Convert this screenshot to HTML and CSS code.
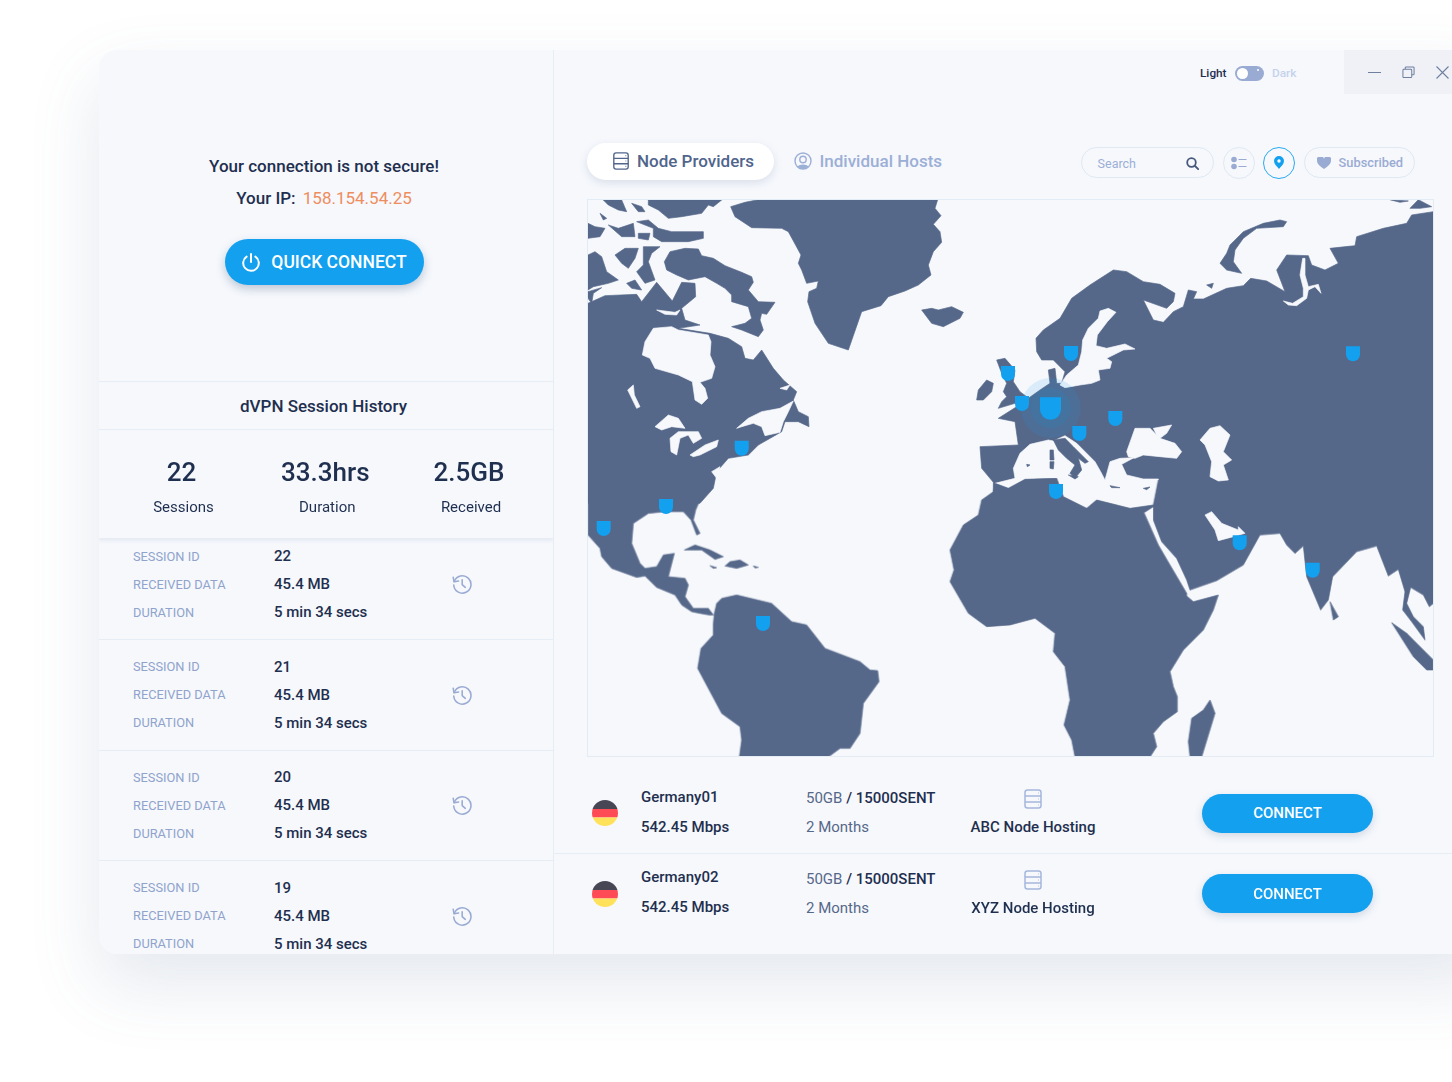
FILE: index.html
```html
<!DOCTYPE html>
<html lang="en">
<head>
    <meta charset="UTF-8">
    <title>dVPN Client</title>
    <link rel="stylesheet" href="styles.css">
</head>
<body>
    <svg class="defs" width="0" height="0">
        <defs>
            <symbol id="server" viewBox="0 0 18 20">
                <rect x="1" y="1" width="16" height="18" rx="2.5" fill="none" stroke="currentColor" stroke-width="1.5"/>
                <path d="M1 7h16M1 13h16" stroke="currentColor" stroke-width="1.5"/>
                <path d="M14 4h.8M14 10h.8M14 16h.8" stroke="currentColor" stroke-width="1.2"/>
            </symbol>
            <symbol id="history" viewBox="0 0 24 24">
                <path d="M3.6 9.2A9.4 9.4 0 1 1 3 13" fill="none" stroke="currentColor" stroke-width="1.7" stroke-linecap="round"/>
                <path d="M2.4 4.6l.9 5 5-.9" fill="none" stroke="currentColor" stroke-width="1.7" stroke-linecap="round" stroke-linejoin="round"/>
                <path d="M12.2 7.4v5.2l3.4 3" fill="none" stroke="currentColor" stroke-width="1.7" stroke-linecap="round" stroke-linejoin="round"/>
            </symbol>
            <symbol id="flag-de" viewBox="0 0 26 26">
                <clipPath id="flag-clip"><circle cx="13" cy="13" r="13"/></clipPath>
                <g clip-path="url(#flag-clip)">
                    <rect width="26" height="9" fill="#464655"/>
                    <rect y="9" width="26" height="8.5" fill="#ff4b55"/>
                    <rect y="17.5" width="26" height="8.5" fill="#ffe15a"/>
                </g>
            </symbol>
            <path id="pin" d="M0 0h14v8a7 7 0 0 1-14 0z"/>
        </defs>
    </svg>

    <div class="window">
        <aside class="sidebar">
            <div class="connection">
                <p class="conn-title">Your connection is not secure!</p>
                <p class="conn-ip">Your IP: <span class="ip">158.154.54.25</span></p>
                <button class="quick-btn">
                    <svg width="20" height="20" viewBox="0 0 20 20" fill="none" stroke="#fff" stroke-width="2" stroke-linecap="round">
                        <path d="M10 2v8"/>
                        <path d="M5.6 4.6a7.8 7.8 0 1 0 8.8 0"/>
                    </svg>
                    QUICK CONNECT
                </button>
            </div>

            <h2 class="history-title">dVPN Session History</h2>

            <div class="stats">
                <div class="stat"><strong>22</strong><span>Sessions</span></div>
                <div class="stat"><strong>33.3hrs</strong><span>Duration</span></div>
                <div class="stat"><strong>2.5GB</strong><span>Received</span></div>
            </div>

            <div class="sessions">
                <div class="session">
                    <span class="s-label">SESSION ID</span><span class="s-value">22</span>
                    <svg class="s-icon"><use href="#history"/></svg>
                    <span class="s-label">RECEIVED DATA</span><span class="s-value">45.4 MB</span>
                    <span class="s-label">DURATION</span><span class="s-value">5 min 34 secs</span>
                </div>
                <div class="session">
                    <span class="s-label">SESSION ID</span><span class="s-value">21</span>
                    <svg class="s-icon"><use href="#history"/></svg>
                    <span class="s-label">RECEIVED DATA</span><span class="s-value">45.4 MB</span>
                    <span class="s-label">DURATION</span><span class="s-value">5 min 34 secs</span>
                </div>
                <div class="session">
                    <span class="s-label">SESSION ID</span><span class="s-value">20</span>
                    <svg class="s-icon"><use href="#history"/></svg>
                    <span class="s-label">RECEIVED DATA</span><span class="s-value">45.4 MB</span>
                    <span class="s-label">DURATION</span><span class="s-value">5 min 34 secs</span>
                </div>
                <div class="session">
                    <span class="s-label">SESSION ID</span><span class="s-value">19</span>
                    <svg class="s-icon"><use href="#history"/></svg>
                    <span class="s-label">RECEIVED DATA</span><span class="s-value">45.4 MB</span>
                    <span class="s-label">DURATION</span><span class="s-value">5 min 34 secs</span>
                </div>
            </div>
        </aside>

        <main class="content">
            <div class="topbar">
                <span class="mode mode-on">Light</span>
                <span class="toggle"><span class="knob"></span><span class="dot"></span></span>
                <span class="mode mode-off">Dark</span>
                <div class="win-controls">
                    <svg width="13" height="13" viewBox="0 0 13 13" fill="none" stroke="#6f7f9f" stroke-width="1.1"><path d="M0 6.5h13"/></svg>
                    <svg width="13" height="13" viewBox="0 0 14 13" fill="none" stroke="#6f7f9f" stroke-width="1.1"><rect x="1" y="3" width="9.5" height="9" rx="1"/><path d="M3.5 3V1.5a1 1 0 0 1 1-1h7.5a1 1 0 0 1 1 1V8a1 1 0 0 1-1 1h-1.5"/></svg>
                    <svg width="13" height="13" viewBox="0 0 13 13" fill="none" stroke="#6f7f9f" stroke-width="1.1"><path d="M.5.5l12 12M12.5.5l-12 12"/></svg>
                </div>
            </div>

            <div class="toolbar">
                <div class="tab tab-active">
                    <svg class="tab-icon"><use href="#server"/></svg>
                    Node Providers
                </div>
                <div class="tab">
                    <svg class="tab-icon" viewBox="0 0 18 18">
                        <circle cx="9" cy="9" r="8" fill="none" stroke="currentColor" stroke-width="1.4"/>
                        <circle cx="9" cy="7.5" r="3.2" fill="none" stroke="currentColor" stroke-width="1.4"/>
                        <path d="M3.4 14.6a6.5 4.5 0 0 1 11.2 0A8 8 0 0 1 3.4 14.6z" fill="currentColor"/>
                    </svg>
                    Individual Hosts
                </div>
                <div class="tools">
                    <div class="search">
                        <span>Search</span>
                        <svg width="13" height="13" viewBox="0 0 13 13" fill="none" stroke="#46587c" stroke-width="1.8" stroke-linecap="round"><circle cx="5.5" cy="5.5" r="4.3"/><path d="M9 9l3.2 3.2"/></svg>
                    </div>
                    <div class="round-btn">
                        <svg width="16" height="14" viewBox="0 0 16 14"><circle cx="3" cy="3.5" r="2.8" fill="#9aabd3"/><circle cx="3" cy="10.5" r="2.8" fill="#9aabd3"/><path d="M7.5 3.5h8M7.5 10.5h8" stroke="#9aabd3" stroke-width="1.1"/></svg>
                    </div>
                    <div class="round-btn round-on">
                        <svg width="10" height="13" viewBox="0 0 10 13"><path d="M5 0a5 5 0 0 1 5 5c0 3-3 5.5-5 8-2-2.5-5-5-5-8a5 5 0 0 1 5-5z" fill="#12a0ef"/><circle cx="5" cy="5" r="1.7" fill="#fff"/></svg>
                    </div>
                    <div class="sub-btn">
                        <svg width="14" height="12" viewBox="0 0 14 12"><path d="M7 12C3 9 0 6.8 0 3.7A3.5 3.5 0 0 1 7 2a3.5 3.5 0 0 1 7 1.7C14 6.8 11 9 7 12z" fill="#9aabd3"/></svg>
                        Subscribed
                    </div>
                </div>
            </div>

            <div class="map">
                <svg class="map-svg" viewBox="587 199 847 558" width="847" height="558">
                    <g class="world">
                    <g class="land">
                        <!-- north america and arctic -->
                        <g transform="translate(585 195) scale(.33333)">
                            <path d="M9 325L60 302 155 298 170 320 215 262 262 318 290 262 330 265 332 305 290 340 300 375 345 390 280 400 375 415 430 430 470 455 480 490 505 495 530 465 565 520 595 555 635 590 625 615 640 650 670 665 672 695 640 680 600 680 590 710 520 750 490 780 430 790 395 830 385 880 345 925 9 925Z"/>
                            <path d="M238 200L255 170 300 160 340 162 350 182 385 190 420 212 470 232 500 245 505 262 490 285 520 320 570 322 545 358 530 355 525 375 535 405 520 425 470 405 440 395 480 385 500 370 490 335 440 320 440 300 420 280 395 265 360 245 310 255 275 240 245 225Z"/>
                            <path d="M55 15L110 15 125 50 100 45 70 30Z"/>
                            <path d="M140 25L170 35 180 50 160 50Z"/>
                            <path d="M190 15L410 15 385 35 370 30 350 55 320 60 290 65 250 70 220 45 190 30Z"/>
                            <path d="M45 55L65 70 55 75Z"/>
                            <path d="M155 80L190 75 220 100 260 110 355 110 355 130 310 140 230 140 205 125 205 100Z"/>
                            <path d="M160 115L195 115 190 135 160 130Z"/>
                            <path d="M9 85L30 95 60 100 45 125 9 130Z"/>
                            <path d="M70 90L100 100 145 85 150 125 110 125Z"/>
                            <path d="M90 180L120 160 160 160 150 190 130 220 110 205Z"/>
                            <path d="M175 155L225 155 200 175 190 200 210 255 180 265 155 230 175 210Z"/>
                            <path d="M9 180L30 170 50 185 65 230 100 255 70 265 25 275 9 285Z"/>
                            <path d="M125 265L150 255 170 285 140 280Z"/>
                            <path d="M9 290L50 278 25 295 20 325 9 310Z"/>
                            <!-- greenland, iceland -->
                            <path d="M437 35L480 22 520 14 1058 14 1050 40 1068 62 1045 88 1065 110 1070 142 1045 170 1030 210 1038 240 1000 270 960 288 910 305 888 332 830 350 790 465 730 445 690 385 668 320 672 290 695 280 700 258 665 265 650 225 640 205 648 180 610 110 590 100 500 98 450 65Z"/>
                            <path d="M1010 345L1040 340 1060 345 1100 335 1135 352 1125 370 1075 395 1040 385 1025 365Z"/>
                        </g>
                        <!-- central and south america -->
                        <g transform="translate(585 500) scale(.33333)">
                            <path d="M9 0L345 0 332 30 325 60 345 100 335 105 318 60 295 35 240 35 190 40 145 70 140 130 165 190 180 205 215 200 235 165 268 160 250 230 300 235 310 255 300 290 325 325 350 325 370 325 385 345 372 345 345 340 320 335 290 315 270 285 215 262 180 228 155 232 80 205 50 170 45 145 9 105Z"/>
                            <path d="M388 340L395 310 410 295 455 285 560 310 620 365 665 375 720 445 825 485 855 510 878 512 882 545 835 610 825 700 795 745 765 745 730 771 463 771 470 720 465 680 410 640 338 505 348 445 385 405 385 370Z"/>
                            <path d="M298 150L330 135 375 150 415 170 390 178 350 150Z"/>
                            <path d="M435 185L465 180 490 195 455 205 420 198Z"/>
                            <path d="M375 197L395 203 385 205Z"/>
                            <path d="M505 198L520 202 510 204Z"/>
                        </g>
                        <!-- eurasia -->
                        <g transform="translate(1010 195) scale(.33333)">
                            <path d="M80 470L78 430 100 405 150 370 185 310 240 270 310 225 350 230 400 260 450 268 495 295 490 320 470 340 400 315 430 375 460 382 490 350 520 335 535 285 560 290 550 312 580 312 650 280 700 272 722 250 770 258 825 290 800 225 830 180 895 182 905 210 945 225 985 205 960 160 1035 152 1040 125 1120 100 1190 85 1205 60 1270 50 1270 930 -50 930 -50 862 -85 820 -90 755 25 750 15 680 -35 670 20 635 55 610 90 585 120 565 115 525 135 520 140 565 155 565 165 530 130 495 95 495Z"/>
                            <path d="M830 80L820 95 740 100 700 130 675 165 670 200 695 235 650 225 630 205 650 175 660 150 700 110 760 85 810 75Z"/>
                            <path d="M1140 14L1195 18 1170 22Z"/>
                            <path d="M1200 40L1225 14 1265 35 1230 40Z"/>
                            <path d="M1250 175L1270 165 1270 178Z"/>
                            <path d="M590 270L610 265 605 280Z"/>
                        </g>
                        <!-- south asia -->
                        <g transform="translate(940 470) scale(.33333)">
                            <path d="M640 0L1480 0 1480 400 1468 410 1450 375 1412 352 1400 400 1420 440 1450 470 1455 510 1415 455 1388 420 1395 365 1375 298 1345 318 1310 228 1250 245 1178 320 1165 390 1142 420 1100 320 1090 228 1065 250 1040 225 1020 190 960 195 935 240 910 285 830 332 750 360 740 330 710 265 665 215 640 150Z"/>
                        </g>
                        <!-- britain -->
                        <g transform="translate(960 340) scale(.33333)">
                            <path d="M110 60L135 55 165 90 160 125 180 155 200 170 165 190 115 205 125 185 140 170 130 155 140 130 125 100Z"/>
                            <path d="M55 150L80 120 100 130 95 155 70 180 50 180Z"/>
                        </g>
                    </g>

                    <g class="water">
                        <g transform="translate(585 195) scale(.33333)">
                            <path d="M172 480L180 440 205 400 260 395 280 405 370 420 378 440 375 480 390 515 380 550 345 562 360 580 368 610 350 628 330 615 322 560 280 540 210 520 195 490Z"/>
                            <path d="M455 700L490 670 530 650 585 640 625 618 610 650 595 680 585 712 540 722 530 695 505 685 470 695Z"/>
                            <path d="M210 695L250 660 280 670 300 700 260 695 230 705Z"/>
                            <path d="M255 730L280 710 340 710 350 730 325 745 310 720 285 730 275 780 258 770Z"/>
                            <path d="M315 780L360 750 400 735 395 755 345 780 325 785Z"/>
                            <path d="M128 585L145 570 148 600 165 635 155 640Z"/>
                            <path d="M585 580L615 570 605 585Z"/>
                            <path d="M380 830L405 815 395 850Z"/>
                            <path d="M215 345L270 352 285 345 275 360 240 358Z"/>
                            <path d="M375 370L420 358 470 375 440 385 395 380Z"/>
                        </g>
                        <g transform="translate(1010 195) scale(.33333)">
                            <!-- baltic -->
                            <path d="M170 540L205 510 215 470 218 435 235 400 265 370 270 348 295 340 318 352 292 380 262 420 258 452 290 460 345 447 375 462 340 465 290 490 305 500 300 520 265 525 270 555 245 565 210 570 165 578 150 570Z"/>
                            <!-- black sea, caspian -->
                            <path d="M350 770L375 700 420 700 440 720 430 700 485 690 470 715 450 730 495 745 515 770 500 790 450 785 400 780 375 790 355 785Z"/>
                            <path d="M570 735L600 700 630 692 660 720 640 770 665 795 640 810 655 855 625 858 600 845 605 800 585 750Z"/>
                            <!-- ob gulf -->
                            <path d="M820 318L848 325 880 305 880 280 870 240 878 190 885 190 885 240 895 275 925 268 933 295 915 275 895 285 890 310 860 332 835 330Z"/>
                            <!-- mediterranean -->
                            <path d="M-45 865L15 850 10 820 30 775 60 748 115 735 130 738 165 722 200 745 255 800 272 830 285 855 300 800 330 790 372 788 335 808 350 840 400 852 445 852 438 900 430 930 360 940 260 915 230 940 160 905 140 850 45 853 -5 880Z"/>
                        </g>
                        <g transform="translate(940 470) scale(.33333)">
                            <path d="M795 135L815 125 845 160 895 180 895 170 915 190 880 200 835 212 825 180Z"/>
                        </g>
                    </g>

                    <g class="land">
                        <g transform="translate(1010 195) scale(.33333)">
                            <path d="M130 735L165 730 190 755 235 800 225 805 205 790 215 825 195 850 180 835 195 810 170 790 145 765Z"/>
                            <path d="M120 765L130 765 132 795 120 795Z"/>
                            <path d="M120 800L132 800 130 822 120 820Z"/>
                            <path d="M175 840L205 845 195 852Z"/>
                            <path d="M50 808L60 810 52 815Z"/>
                            <path d="M300 872L330 878 305 878Z"/>
                            <path d="M400 880L420 876 410 884Z"/>
                        </g>
                        <!-- africa, sri lanka, sumatra, madagascar -->
                        <g transform="translate(940 470) scale(.33333)">
                            <path d="M165 40L205 55 255 28 350 25 370 80 440 115 470 90 570 115 640 105 655 30 660 100 640 110 612 128 655 225 690 285 740 370 740 378 760 395 835 375 820 420 790 480 730 540 690 605 700 650 712 680 712 725 670 755 640 790 650 830 630 861 405 861 395 810 372 765 390 690 375 590 340 545 345 490 285 445 210 465 140 470 85 430 30 335 42 300 30 240 70 165 115 135 125 90 160 65Z"/>
                            <path d="M1170 395L1195 440 1180 450Z"/>
                            <path d="M1355 458L1400 490 1480 570 1480 600 1460 600 1420 560Z"/>
                            <path d="M810 690L825 730 785 861 750 861 745 815 755 745 790 720Z"/>
                        </g>
                    </g>
                    </g>

                    <circle class="halo" cx="1050.7" cy="408" r="30"/>
                    <circle class="halo" cx="1050.7" cy="408" r="20"/>

                    <g class="pins">
                        <use href="#pin" x="734.7" y="440.7"/>
                        <use href="#pin" x="659" y="499"/>
                        <use href="#pin" x="596.7" y="521"/>
                        <use href="#pin" x="756" y="616"/>
                        <use href="#pin" x="1001" y="366"/>
                        <use href="#pin" x="1015" y="396"/>
                        <use href="#pin" x="1072.3" y="426"/>
                        <use href="#pin" x="1108.3" y="411"/>
                        <use href="#pin" x="1064" y="346"/>
                        <use href="#pin" x="1346" y="346.3"/>
                        <use href="#pin" x="1049" y="484"/>
                        <use href="#pin" x="1232.7" y="535.3"/>
                        <use href="#pin" x="1305.7" y="562.7"/>
                        <use href="#pin" transform="translate(1040 397.3) scale(1.5)"/>
                    </g>
                </svg>
            </div>

            <div class="nodes">
                <div class="node">
                    <svg class="flag"><use href="#flag-de"/></svg>
                    <div class="node-col node-name">
                        <span>Germany01</span>
                        <span>542.45 Mbps</span>
                    </div>
                    <div class="node-col node-plan">
                        <span>50GB <b>/ 15000SENT</b></span>
                        <span>2 Months</span>
                    </div>
                    <div class="node-col node-host">
                        <svg class="host-icon"><use href="#server"/></svg>
                        <span>ABC Node Hosting</span>
                    </div>
                    <button class="connect-btn">CONNECT</button>
                </div>
                <div class="node">
                    <svg class="flag"><use href="#flag-de"/></svg>
                    <div class="node-col node-name">
                        <span>Germany02</span>
                        <span>542.45 Mbps</span>
                    </div>
                    <div class="node-col node-plan">
                        <span>50GB <b>/ 15000SENT</b></span>
                        <span>2 Months</span>
                    </div>
                    <div class="node-col node-host">
                        <svg class="host-icon"><use href="#server"/></svg>
                        <span>XYZ Node Hosting</span>
                    </div>
                    <button class="connect-btn">CONNECT</button>
                </div>
            </div>
        </main>
    </div>
</body>
</html>
```

FILE: styles.css
```css
* {
    box-sizing: border-box;
}
html, body {
    height: 100%;
}
body {
    margin: 0;
    padding: 50px 0 0 99px;
    overflow: hidden;
    background: #fff;
    font-family: Roboto, "Liberation Sans", sans-serif;
    color: #1f2f4f;
}
p, h2 {
    margin: 0;
}
.defs {
    position: absolute;
}

.window {
    display: flex;
    width: 1400px;
    height: 904px;
    border-radius: 18px;
    background: #f6f8fc;
    box-shadow: 0 30px 70px rgba(90, 110, 150, 0.16);
    overflow: hidden;
}

/* left panel */
.sidebar {
    display: flex;
    flex-direction: column;
    flex: none;
    width: 455px;
    border-right: 1px solid #e6edf5;
    overflow: hidden;
}
.connection {
    display: flex;
    flex-direction: column;
    align-items: center;
    flex: none;
    height: 331px;
    padding: 106px 4px 0 0;
}
.conn-title {
    font-size: 17px;
    font-weight: 500;
    line-height: 20px;
}
.conn-ip {
    margin-top: 12px;
    font-size: 17px;
    font-weight: 500;
    line-height: 20px;
}
.ip {
    margin-left: 3px;
    color: #ee8d5e;
    font-weight: 400;
}
.quick-btn {
    display: flex;
    align-items: center;
    justify-content: center;
    gap: 10px;
    width: 199px;
    height: 46px;
    margin-top: 31px;
    border: none;
    border-radius: 23px;
    background: #12a0ef;
    box-shadow: 0 4px 10px rgba(60, 90, 130, 0.3);
    color: #fff;
    font-family: inherit;
    font-size: 17.5px;
    font-weight: 500;
}
.history-title {
    flex: none;
    height: 49px;
    padding-right: 5px;
    border-top: 1px solid #e6edf5;
    border-bottom: 1px solid #e6edf5;
    font-size: 17px;
    font-weight: 500;
    line-height: 48px;
    text-align: center;
}
.stats {
    position: relative;
    display: flex;
    flex: none;
    gap: 23.75px;
    height: 108px;
    padding: 26px 0 0 24.5px;
    box-shadow: 0 3px 3px rgba(120, 140, 170, 0.12);
}
.stat {
    display: flex;
    flex-direction: column;
    align-items: center;
    width: 120px;
}
.stat strong {
    margin-right: 4px;
    font-size: 26px;
    font-weight: 500;
    line-height: 32px;
}
.stat span {
    margin-top: 7px;
    font-size: 15px;
    line-height: 24px;
}
.sessions {
    flex: 1;
    overflow: hidden;
    padding-top: 4px;
}
.session {
    display: grid;
    grid-template-columns: 141px 177px 22px;
    grid-auto-rows: 28px;
    align-items: center;
    padding: 0 0 13px 34px;
    border-bottom: 1px solid #e6edf5;
}
.session + .session {
    padding-top: 12.5px;
}
.s-label {
    color: #8fa3cc;
    font-size: 12.8px;
    grid-column: 1;
}
.s-value {
    font-size: 15px;
    font-weight: 500;
    grid-column: 2;
}
.s-icon {
    grid-column: 3;
    grid-row: 1 / span 3;
    width: 22px;
    height: 22px;
    color: #9aabd3;
}

/* right panel */
.content {
    flex: 1;
    min-width: 0;
}
.topbar {
    display: flex;
    align-items: center;
    height: 44px;
    padding-left: 646px;
}
.mode {
    margin-top: 2px;
    font-size: 11.8px;
    font-weight: 500;
}
.mode-on {
    width: 26px;
}
.mode-off {
    width: 24px;
    color: #c5d2ec;
}
.toggle {
    position: relative;
    width: 29px;
    height: 15px;
    margin: 2px 8px 0 9px;
    border-radius: 8px;
    background: #9aabd3;
}
.knob {
    position: absolute;
    top: 2px;
    left: 2px;
    width: 11px;
    height: 11px;
    border-radius: 50%;
    background: #fff;
}
.dot {
    position: absolute;
    top: 3px;
    right: 5px;
    width: 2px;
    height: 2px;
    border-radius: 50%;
    background: #fff;
}
.win-controls {
    display: flex;
    align-items: center;
    gap: 21px;
    width: 150px;
    height: 44px;
    margin-left: 48px;
    padding-left: 24px;
    background: #eff1f6;
}
.toolbar {
    display: flex;
    align-items: center;
    height: 37px;
    margin-top: 49px;
    padding-left: 33px;
}
.tab {
    display: flex;
    align-items: center;
    gap: 7.5px;
    height: 37px;
    padding: 0 0 1px 20px;
    color: #9cafd6;
    font-size: 17px;
    font-weight: 500;
    white-space: nowrap;
}
.tab-active {
    width: 187px;
    padding-left: 24.5px;
    border-radius: 19px;
    background: #fff;
    box-shadow: 0 3px 8px rgba(90, 110, 150, 0.18);
    color: #50658c;
}
.tab-icon {
    width: 18px;
    height: 18px;
}
.tools {
    display: flex;
    align-items: center;
    gap: 9px;
    margin: 2px 0 0 138.5px;
}
.search {
    display: flex;
    align-items: center;
    justify-content: space-between;
    width: 133px;
    height: 31px;
    padding: 1px 14px 0 16px;
    border: 1px solid #dfe9f3;
    border-radius: 16px;
    color: #9cafd6;
    font-size: 12.5px;
}
.round-btn {
    display: flex;
    align-items: center;
    justify-content: center;
    width: 32px;
    height: 32px;
    border: 1px solid #dfe9f3;
    border-radius: 50%;
}
.round-on {
    margin-left: -1px;
    border-color: #2aa9f2;
}
.sub-btn {
    display: flex;
    align-items: center;
    gap: 8px;
    width: 111px;
    height: 31px;
    padding-left: 12px;
    border: 1px solid #dfe9f3;
    border-radius: 16px;
    color: #9aabd3;
    font-size: 12.8px;
    font-weight: 500;
}
.map {
    width: 847px;
    height: 558px;
    margin: 19px 0 0 33px;
    outline: 1px solid #e3ecf5;
    outline-offset: -1px;
    overflow: hidden;
}
.map-svg {
    display: block;
}
.world {
    filter: blur(0.6px);
}
.land {
    fill: #56688a;
    stroke: #56688a;
    stroke-width: 2;
    stroke-linejoin: round;
}
.water {
    fill: #f6f8fc;
    stroke: #f6f8fc;
    stroke-width: 2;
    stroke-linejoin: round;
}
.halo {
    fill: rgba(18, 160, 240, 0.12);
}
.pins {
    fill: #12a0ef;
}

/* node rows */
.nodes {
    margin-top: 16px;
}
.node {
    display: flex;
    align-items: center;
    height: 80px;
    padding-left: 38px;
}
.node + .node {
    border-top: 1px solid #e6edf5;
}
.flag {
    flex: none;
    width: 26px;
    height: 26px;
    margin-right: 23px;
}
.node-col {
    display: flex;
    flex-direction: column;
    flex: none;
    gap: 11px;
    font-size: 15px;
    font-weight: 500;
    line-height: 19px;
}
.node-name {
    width: 165px;
    padding-bottom: 2px;
}
.node-plan {
    width: 165px;
    gap: 10px;
    color: #56688a;
    font-weight: 400;
}
.node-plan b {
    color: #1f2f4f;
    font-weight: 500;
}
.node-host {
    align-items: center;
    gap: 9px;
    width: 124px;
    white-space: nowrap;
}
.host-icon {
    width: 18px;
    height: 20px;
    color: #a5b7dc;
}
.connect-btn {
    flex: none;
    width: 171px;
    height: 39px;
    margin-left: 107px;
    border: none;
    border-radius: 20px;
    background: #12a0ef;
    box-shadow: 0 3px 8px rgba(60, 90, 130, 0.2);
    color: #fff;
    font-family: inherit;
    font-size: 15px;
    font-weight: 500;
}
```
